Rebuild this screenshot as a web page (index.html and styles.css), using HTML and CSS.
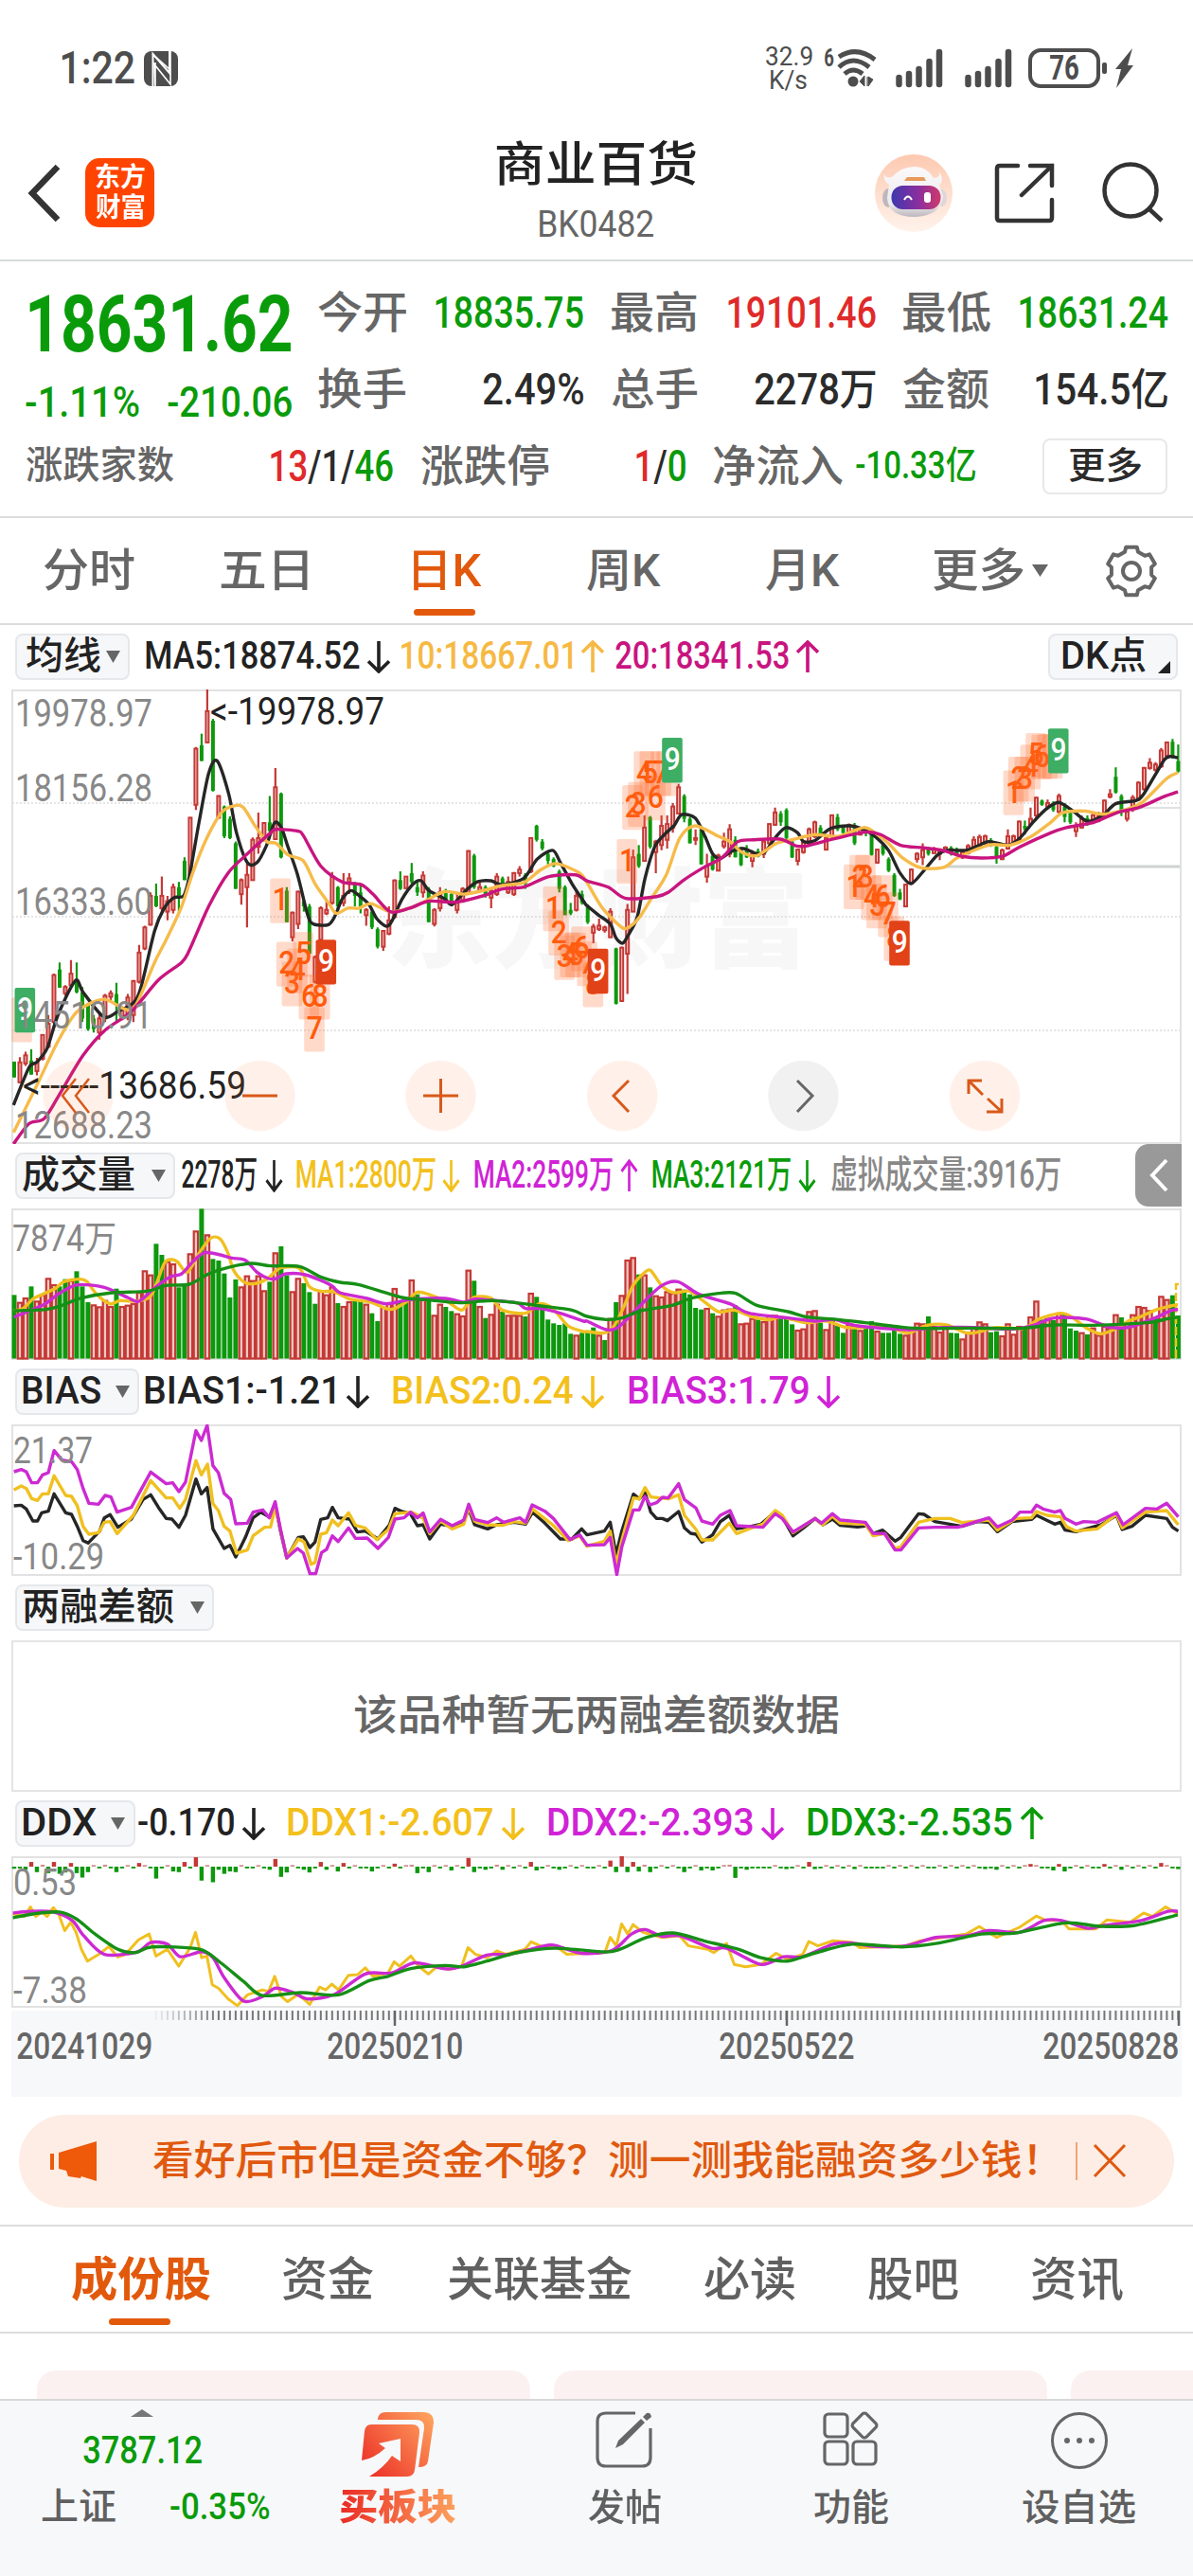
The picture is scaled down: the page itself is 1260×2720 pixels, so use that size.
FILE: index.html
```html
<!DOCTYPE html>
<html lang="zh-CN">
<head>
<meta charset="utf-8">
<title>商业百货 BK0482</title>
<link rel="stylesheet" href="styles.css">
</head>
<body>
<svg class="defs" width="0" height="0">
  <symbol id="down" viewBox="0 0 26 36" preserveAspectRatio="none"><path d="M13 1V34M2 23L13 34L24 23" fill="none" stroke="currentColor" stroke-width="3.6"/></symbol>
  <symbol id="up" viewBox="0 0 26 36" preserveAspectRatio="none"><path d="M13 35V2M2 13L13 2L24 13" fill="none" stroke="currentColor" stroke-width="3.6"/></symbol>
  <symbol id="signal" viewBox="0 0 51 42"><path d="M3.500 31V38M14 27V38M24.500 22V38M35.500 14V38M46 4V38" fill="none" stroke="#4d4d4d" stroke-width="6.500" stroke-linecap="round"/></symbol>
</svg>

<div class="status">
  <span class="clock" data-w="77">1:22</span>
  <svg class="nfc" width="36" height="37" viewBox="0 0 36 37"><rect width="36" height="37" rx="8" fill="#4d4d4d"/><path d="M9.500 37V3L27 23V0" fill="none" stroke="#fff" stroke-width="2"/><path d="M9 3L27 19M12 12V37L11 14L28 35L28 0" fill="none" stroke="#fff" stroke-width="1.600"/></svg>
  <div class="speed"><span data-w="49">32.9</span><span data-w="38">K/s</span></div>
  <span class="six" data-w="10">6</span>
  <svg class="wifi" width="44" height="42" viewBox="0 0 44 42"><g fill="none" stroke="#4d4d4d" stroke-width="5"><path d="M3 9Q22-3 41 12"/><path d="M3 20Q18 6 35 20"/><path d="M9 27Q18 19 28 27"/></g><circle cx="18" cy="35" r="5.500" fill="#4d4d4d"/><path d="M25 35L30 29V40ZM33 30V40M39 33L34 30V40Z" fill="#4d4d4d" stroke="#4d4d4d"/></svg>
  <svg class="sig" width="51" height="42"><use href="#signal"/></svg>
  <svg class="sig2" width="51" height="42"><use href="#signal"/></svg>
  <div class="battery"><span data-w="30">76</span></div>
  <svg width="36" height="42" viewBox="0 0 36 42"><rect x="2" y="15" width="5" height="12" rx="2" fill="#4d4d4d"/><path d="M34 0L16 22H22L17 42L35 18H29Z" fill="#4d4d4d"/></svg>
</div>

<header class="head">
  <svg class="back" width="36" height="62" viewBox="0 0 36 62"><path d="M33 3L6 31L33 59" fill="none" stroke="#333" stroke-width="6.500"/></svg>
  <div class="logo"><span data-w="52">东方</span><span data-w="52">财富</span></div>
  <div class="title"><h1 data-w="211">商业百货</h1><p data-w="120">BK0482</p></div>
  <svg width="82" height="82" viewBox="0 0 82 82" class="robot">
    <defs><linearGradient id="peach" x2="0" y2="1"><stop stop-color="#fdc9b0"/><stop offset="1" stop-color="#fff3ec"/></linearGradient><linearGradient id="visor"><stop stop-color="#3e38ae"/><stop offset=".55" stop-color="#8b2f9e"/><stop offset="1" stop-color="#ce3a6c"/></linearGradient><linearGradient id="helmet" x2="0" y2="1"><stop stop-color="#fbf9fa"/><stop offset=".75" stop-color="#eceaed"/><stop offset="1" stop-color="#bdb7bc"/></linearGradient></defs>
    <circle cx="41" cy="41" r="41" fill="url(#peach)"/><ellipse cx="14" cy="46" rx="6" ry="10" fill="#bdb8be"/><ellipse cx="71" cy="46" rx="5" ry="9" fill="#ddd7da"/>
    <path d="M10 19Q9 26 18 24Q28 13 42 13Q55 13 62 25Q70 25 68 18Q74 28 68 33L72 44Q70 65 42 66Q14 66 13 46L15 32Q8 28 10 19Z" fill="url(#helmet)"/><path d="M34 24H52L54 28H31Z" fill="#e79a5c"/>
    <rect x="17.500" y="33" width="52" height="25" rx="12" fill="url(#visor)"/><path d="M31 48Q35 41 39 48" fill="none" stroke="#fff" stroke-width="2"/><rect x="52" y="40" width="7" height="11" rx="3" fill="#fff"/></svg>
  <svg class="share" width="64" height="64" viewBox="0 0 64 64"><path d="M25 3H6Q3 3 3 6V58Q3 61 6 61H58Q61 61 61 58V39M61 24V3H38M61 3L29 34" fill="none" stroke="#333" stroke-width="4.500" stroke-linecap="round"/></svg>
  <svg class="search" width="66" height="66" viewBox="0 0 66 66"><circle cx="30" cy="30" r="27.500" fill="none" stroke="#333" stroke-width="4.500"/><path d="M49 49L63 62" stroke="#333" stroke-width="4.500"/></svg>
</header>

<section class="quote">
  <div class="last">
    <div class="price green" data-w="276">18631.62</div>
    <div class="change green"><span data-w="120">-1.11%</span><span data-w="131">-210.06</span></div>
  </div>
  <div class="stats">
    <b data-w="93">今开</b><i class="green" data-w="156">18835.75</i><b data-w="90">最高</b><i class="red" data-w="156">19101.46</i><b data-w="92">最低</b><i class="green" data-w="156">18631.24</i>
    <b data-w="92">换手</b><i data-w="106">2.49%</i><b data-w="90">总手</b><i data-w="128">2278万</i><b data-w="90">金额</b><i data-w="139">154.5亿</i>
  </div>
  <div class="breadth">
    <b class="small" data-w="156">涨跌家数</b><i data-w="129"><em class="red">13</em>/1/<em class="green">46</em></i><b data-w="135">涨跌停</b><i data-w="52"><em class="red">1</em>/<em class="green">0</em></i><b data-w="137">净流入</b><i class="small green" data-w="126">-10.33亿</i><div class="more"><span data-w="76">更多</span></div>
  </div>
</section>

<nav class="periods">
  <span data-w="96">分时</span><span data-w="92">五日</span><span class="on" data-w="72">日K</span><span data-w="78">周K</span><span data-w="78">月K</span><span data-w="95">更多</span>
  <svg width="18" height="14"><path d="M0 0H17L8.500 13Z" fill="#666"/></svg>
  <svg width="58" height="58" viewBox="-29 -29 58 58"><path id="gear" d="" fill="none" stroke="#666" stroke-width="4" stroke-linejoin="round"/><circle r="9" fill="none" stroke="#666" stroke-width="4"/></svg>
</nav>

<div class="legend ma">
  <div class="pick"><span data-w="78">均线</span><svg width="15" height="13"><path d="M0 0H15L7.500 13Z" fill="#666"/></svg></div>
  <span data-w="226">MA5:18874.52</span><svg><use href="#down"/></svg>
  <span class="amber" data-w="180">10:18667.01</span><svg class="amber"><use href="#up"/></svg>
  <span class="rose" data-w="183">20:18341.53</span><svg class="rose"><use href="#up"/></svg>
  <div class="pick dk"><span data-w="88">DK点</span><svg width="13" height="13"><path d="M13 0V13H0Z" fill="#222"/></svg></div>
</div>
<div class="kbox">
  <svg id="kline" class="chart tall" viewBox="0 728 1260 480"></svg>
</div>

<div class="legend vol">
  <div class="pick"><span data-w="118">成交量</span><svg width="15" height="13"><path d="M0 0H15L7.500 13Z" fill="#666"/></svg></div>
  <span data-w="79">2278万</span><svg><use href="#down"/></svg>
  <span class="gold" data-w="147">MA1:2800万</span><svg class="gold"><use href="#down"/></svg>
  <span class="violet" data-w="146">MA2:2599万</span><svg class="violet"><use href="#up"/></svg>
  <span class="green" data-w="146">MA3:2121万</span><svg class="green"><use href="#down"/></svg>
  <span class="grey" data-w="242">虚拟成交量:3916万</span>
  <div class="drawer"><svg width="20" height="36" viewBox="0 0 20 36"><path d="M18 2L3 18L18 34" fill="none" stroke="#fff" stroke-width="4"/></svg></div>
</div>
<svg id="volume" class="chart" viewBox="0 1276 1260 160"></svg>

<div class="legend bias">
  <div class="pick"><span data-w="82">BIAS</span><svg width="15" height="13"><path d="M0 0H15L7.500 13Z" fill="#666"/></svg></div>
  <span data-w="200">BIAS1:-1.21</span><svg><use href="#down"/></svg>
  <span class="gold" data-w="190">BIAS2:0.24</span><svg class="gold"><use href="#down"/></svg>
  <span class="violet" data-w="190">BIAS3:1.79</span><svg class="violet"><use href="#down"/></svg>
</div>
<svg id="bias" class="chart" viewBox="0 1504 1260 160"></svg>

<div class="legend margin">
  <div class="pick"><span data-w="159">两融差额</span><svg width="15" height="13"><path d="M0 0H15L7.500 13Z" fill="#666"/></svg></div>
</div>
<div class="empty"><span data-w="512">该品种暂无两融差额数据</span></div>

<div class="legend ddx">
  <div class="pick"><span data-w="78">DDX</span><svg width="15" height="13"><path d="M0 0H15L7.500 13Z" fill="#666"/></svg></div>
  <span data-w="101">-0.170</span><svg><use href="#down"/></svg>
  <span class="gold" data-w="217">DDX1:-2.607</span><svg class="gold"><use href="#down"/></svg>
  <span class="violet" data-w="216">DDX2:-2.393</span><svg class="violet"><use href="#down"/></svg>
  <span class="green" data-w="216">DDX3:-2.535</span><svg class="green"><use href="#up"/></svg>
</div>
<svg id="ddx" class="chart" viewBox="0 1960 1260 160"></svg>
<div class="axis">
  <svg id="ticks" width="1236" height="17" viewBox="12 2123 1236 17"></svg>
  <div class="dates"><span data-w="142">20241029</span><span data-w="142">20250210</span><span data-w="142">20250522</span><span data-w="142">20250828</span></div>
</div>

<div class="promo">
  <svg width="50" height="44" viewBox="0 0 50 44"><path d="M0 14H4V31H0ZM9 13L49 1V43L33 38L32 40L19 38L17 32L9 30Z" fill="#ee5a0a"/></svg>
  <span data-w="932">看好后市但是资金不够？测一测我能融资多少钱！</span>
  <svg class="close" width="54" height="40" viewBox="0 0 54 40"><path d="M1 0V40" stroke="#e0590f" stroke-width="1"/><path d="M20 3L52 36M52 3L20 36" stroke="#e0590f" stroke-width="3"/></svg>
</div>

<nav class="sections"><span class="on" data-w="146">成份股</span><span data-w="95">资金</span><span data-w="194">关联基金</span><span data-w="96">必读</span><span data-w="95">股吧</span><span data-w="96">资讯</span></nav>
<div class="cards"><div></div><div></div><div></div></div>

<footer class="bar">
  <div class="index">
    <svg width="24" height="8"><path d="M12 0L24 8H0Z" fill="#777"/></svg>
    <strong class="green" data-w="125">3787.12</strong>
    <div><span data-w="78">上证</span><strong class="green" data-w="104">-0.35%</strong></div>
  </div>
  <div class="act buy">
    <svg width="78" height="70" viewBox="0 0 78 70"><defs><linearGradient id="hot" gradientUnits="userSpaceOnUse" x1="5" y1="65" x2="72" y2="5"><stop stop-color="#ec2f27"/><stop offset="1" stop-color="#fd9f5c"/></linearGradient></defs><g fill="url(#hot)"><path d="M18 8Q19 1 26 1H66Q77 1 77 12L71 53Q70 59 61 59L67 18Q68 9 58 9H18Z"/><path d="M11 14H54Q63 14 62 23L57 62Q56 69 49 69H9Q24 60 33 47L42 53V29L19 34L26 39Q14 50 1 52L4 21Q5 14 11 14Z"/></g></svg>
    <span class="hot" data-w="122">买板块</span>
  </div>
  <div class="act">
    <svg width="60" height="60" viewBox="0 0 60 60"><path d="M42 2H11Q2 2 2 11V49Q2 58 11 58H49Q58 58 58 49V18" fill="none" stroke="#666" stroke-width="3.200"/><path d="M21 39L24 31L48 8L52 12L29 35ZM50 6L54 2Q58 1 59 6L54 10Z" fill="#666"/></svg>
    <span data-w="77">发帖</span>
  </div>
  <div class="act">
    <svg width="60" height="60" viewBox="0 0 60 60"><g fill="none" stroke="#666" stroke-width="3.200"><rect x="2" y="3" width="24" height="24" rx="4"/><rect x="2" y="32" width="24" height="24" rx="4"/><rect x="32" y="32" width="24" height="24" rx="4"/><rect x="34" y="5" width="20" height="20" rx="3" transform="rotate(45 44 15)"/></g></svg>
    <span data-w="78">功能</span>
  </div>
  <div class="act">
    <svg width="62" height="62" viewBox="0 0 62 62"><circle cx="31" cy="31" r="28.500" fill="none" stroke="#666" stroke-width="3"/><g fill="#666"><circle cx="18" cy="31" r="3"/><circle cx="31" cy="31" r="3"/><circle cx="44" cy="31" r="3"/></g></svg>
    <span data-w="119">设自选</span>
  </div>
</footer>
<script src="charts.js"></script>
</body>
</html>
```
FILE: styles.css
```css
* { box-sizing: border-box; }
body { margin: 0; width: 1260px; height: 2720px; overflow: hidden; background: #fff; color: #2b2b2b; font-family: Roboto, "Noto Sans CJK SC", sans-serif; font-size: 46px; line-height: 1; display: flex; flex-direction: column; }
body > * { flex: none; }
.defs { display: block; height: 0; }
svg { display: block; flex: none; }
i, em { font-style: normal; }
b { font-weight: 500; }
[data-w] { display: block; white-space: nowrap; flex: none; }
.ink { display: inline-block; transform-origin: 0 50%; }
.green { color: #0a9b0a; }
.red { color: #e02a2a; }
.grey { color: #888; }

.status { height: 136px; padding: 51px 0 0 65px; display: flex; color: #4d4d4d; }
.status .clock { font-size: 48px; font-weight: 500; margin-top: -3px; }
.nfc { margin: 3px 0 0 10px; }
.speed { width: 52px; margin-left: 619px; font-size: 27px; display: flex; flex-direction: column; align-items: center; margin-top: -3px; line-height: 25px; }
.six { font-size: 26px; font-weight: 700; margin-left: 12px; margin-top: -3px; }
.wifi { margin-left: 2px; }
.sig { margin-left: 19px; }
.sig2 { margin-left: 22px; }
.battery { width: 76px; height: 42px; border: 4px solid #4d4d4d; border-radius: 13px; margin-left: 16px; display: flex; justify-content: center; align-items: center; font-size: 37px; font-weight: 700; line-height: 34px; }

.head { height: 140px; padding: 0 20px 3px 28px; display: flex; align-items: center; border-bottom: 2px solid #d8dcdc; }
.back { margin-right: 26px; }
.logo { width: 73px; height: 73px; flex: none; background: #ff4400; border-radius: 15px; color: #fff; font-size: 28px; font-weight: 700; display: flex; flex-direction: column; align-items: center; justify-content: center; line-height: 32px; }
.title { width: 211px; flex: none; margin-left: 361px; display: flex; flex-direction: column; align-items: center; }
.title h1 { margin: 0; font-size: 50px; font-weight: 500; line-height: 58px; color: #222; }
.title p { margin: 8px 0 0; font-size: 38px; line-height: 52px; color: #666; }
.robot { margin-left: 189px; }
.share { margin-left: 44px; }
.search { margin-left: 50px; }

.quote { height: 271px; display: grid; grid-template-columns: 336px 1fr; grid-template-rows: 176px 1fr; border-bottom: 2px solid #dcdcdc; }
.price { font-size: 84px; font-weight: 700; margin: 25px 0 0 31px; }
.change { margin: 17px 0 0 27px; display: flex; gap: 30px; line-height: 46px; font-size: 45px; font-weight: 500; }
.stats { display: grid; grid-template-columns: 93px 187px 1px 29px 90px 189px 1px 28px 92px 187px; grid-template-rows: 81px 81px; align-items: center; padding-top: 13px; }
.stats b, .breadth b { color: #666; }
.stats i, .breadth i { font-weight: 500; }
.stats i { justify-self: end; }
.stats b:nth-of-type(3n+1) { grid-column: 1; }
.stats i:nth-of-type(3n+1) { grid-column: 2; }
.stats b:nth-of-type(3n+2) { grid-column: 5; }
.stats i:nth-of-type(3n+2) { grid-column: 6; }
.stats b:nth-of-type(3n+3) { grid-column: 9; }
.stats i:nth-of-type(3n+3) { grid-column: 10; }
.breadth { grid-column: 1 / 3; height: 80px; display: grid; grid-template-columns: 258px 159px 227px 81px 151px 197px 132px; align-items: center; padding-left: 28px; }
.breadth .small { font-size: 40px; }
.more { width: 132px; height: 59px; border: 2px solid #e8e8e8; border-radius: 8px; display: grid; place-items: center; font-size: 39px; font-weight: 500; }

.periods { height: 113px; display: grid; grid-template-columns: 187px 204px 183px 189px 177px 104px 76px 58px; align-items: center; padding-left: 46px; font-size: 48px; font-weight: 500; color: #666; border-bottom: 2px solid #dcdcdc; }
.on { position: relative; color: #e2590c; }
.on::after { content: ""; position: absolute; left: 0; top: 64px; width: 65px; height: 7px; border-radius: 4px; background: #e2590c; }

.legend { height: 68px; display: grid; align-items: center; font-size: 40px; padding: 0 0 2px 16px; color: #222; font-weight: 500; }
.legend > svg { width: 26px; height: 35px; }
.amber { color: #f6b944; }
.rose { color: #c8157f; }
.gold { color: #f3c01c; }
.violet { color: #d022d6; }
.pick { height: 49px; background: #f6f7f9; border: 2px solid #e5e7ea; border-radius: 8px; display: flex; align-items: center; gap: 6px; padding-left: 10px; line-height: 44px; }
.ma { grid-template-columns: 138px 233px 37px 189px 37px 190px 267px 137px; }
.ma .pick { width: 121px; }
.ma .dk { width: 137px; gap: 13px; padding-left: 13px; }
.dk svg { align-self: flex-end; margin-bottom: 5px; }
.vol { grid-template-columns: 176px 88px 33px 154px 34px 154px 34px 154px 35px 321px 49px; }
.vol .pick { width: 169px; gap: 18px; padding-left: 6px; }
.vol > svg { width: 19px; }
.drawer { height: 66px; background: #999; border-radius: 14px 0 0 14px; display: grid; place-items: center; }
.bias { grid-template-columns: 137px 212px 50px 198px 51px 198px 1fr; }
.bias .pick { width: 131px; gap: 16px; padding-left: 6px; }
.margin .pick { width: 210px; gap: 17px; padding-left: 7px; }
.ddx { grid-template-columns: 130px 109px 49px 225px 50px 224px 50px 224px 1fr; }
.ddx .pick { width: 127px; gap: 15px; padding-left: 6px; }

.chart { width: 1260px; height: 160px; }
.chart.tall { height: 480px; }
.kbox { height: 480px; }
.empty { height: 160px; margin: 0 12px; border: 2px solid #e4e4e4; display: grid; place-items: center; font-size: 44px; font-weight: 500; color: #666; }
.axis { height: 91px; margin: 3px 12px 0; background: #f7f8fa; }
.dates { display: grid; grid-template-columns: 328px 414px 342px 142px; padding-left: 6px; font-size: 38px; color: #666; margin-top: 1px; line-height: 40px; font-weight: 500; }

.promo { height: 98px; margin: 19px 20px 0; border-radius: 49px; background: #fdede4; display: flex; align-items: center; padding: 0 0 1px 33px; color: #e0590f; font-size: 42px; font-weight: 500; }
.promo > span { margin: 0 42px 0 59px; }
.sections { height: 115px; margin-top: 18px; border-top: 2px solid #dcdcdc; border-bottom: 2px solid #dcdcdc; display: grid; grid-template-columns: 223px 174px 271px 173px 173px 96px; padding: 1px 0 0 76px; align-items: center; font-size: 49px; color: #606060; font-weight: 500; }
.sections .on { font-weight: 700; }
.sections .on::after { left: 39px; top: 65px; }
.cards { height: 69px; padding: 39px 0 0 39px; display: grid; grid-template-columns: 521px 521px 521px; gap: 25px; overflow: hidden; }
.cards div { background: #fcf1f1; border-radius: 20px 20px 0 0; }
.bar { height: 187px; background: #f7f8fa; border-top: 2px solid #d8d8d8; display: grid; grid-template-columns: 300px 239px 240px 240px 241px; color: #606060; font-size: 39px; font-weight: 500; }
.index { display: flex; flex-direction: column; align-items: center; padding-top: 9px; font-size: 41px; }
.index strong { font-weight: 500; }
.index > strong { margin-top: 13px; line-height: 44px; }
.index > div { display: flex; width: 240px; margin-left: 28px; gap: 58px; margin-top: 16px; line-height: 44px; font-size: 39px; }
.act { display: flex; flex-direction: column; align-items: center; padding-top: 11px; }
.act > span { line-height: 44px; margin-top: auto; margin-bottom: 50px; }
.buy .hot { font-weight: 900; font-size: 38px; margin-bottom: 51px; }
.buy .ink { color: transparent; background: linear-gradient(90deg, #ea2a24, #fda15d); -webkit-background-clip: text; background-clip: text; font-style: oblique 8deg; }
```
FILE: charts.js
```js
const NS = 'http://www.w3.org/2000/svg';
const RED = '#c43936', GREEN = '#0d980d', BLACK = '#262626', AMBER = '#f6bb4a', ROSE = '#c8157f', GOLD = '#f0c020', VIOLET = '#cc2ad2';

/* Condense every label to the ink width given in data-w. */
const ctx = document.createElement('canvas').getContext('2d');
document.querySelectorAll('[data-w]').forEach(el => {
  const w = +el.dataset.w, s = getComputedStyle(el);
  ctx.font = `${s.fontWeight} ${s.fontSize} ${s.fontFamily}`;
  const m = ctx.measureText(el.textContent);
  const k = w / (m.actualBoundingBoxLeft + m.actualBoundingBoxRight);
  el.innerHTML = `<span class="ink">${el.innerHTML}</span>`;
  el.style.width = w + 'px';
  el.firstChild.style.transform = `translateX(${m.actualBoundingBoxLeft * k}px) scaleX(${k})`;
});

function add(svg, tag, attrs, text) {
  const n = document.createElementNS(NS, tag);
  for (const a in attrs) n.setAttribute(a, attrs[a]);
  if (text) n.textContent = text;
  svg.appendChild(n);
  return n;
}
const rect = (svg, x, y, width, height, fill, o = {}) => add(svg, 'rect', { x, y, width, height, fill, ...o });
const line = (svg, d, stroke, w = 2, o = {}) => add(svg, 'path', { d, stroke, fill: 'none', 'stroke-width': w, ...o });
const label = (svg, x, y, w, t, fill = '#888', size = 40, o = {}) => add(svg, 'text', { x, y, fill, 'font-size': size, textLength: w, lengthAdjust: 'spacingAndGlyphs', ...o }, t);
const frame = (svg, y, h) => rect(svg, 13, y + 1, 1234, h - 2, 'none', { stroke: '#e2e2e2', 'stroke-width': 2 });

/* Series points are kept in plot units: 2.45 per px across, own vertical scale per panel. */
const pts = s => s.trim().split(/\s+/).map(p => p.split(',').map(Number));
function smooth(p) {
  let d = `M${p[0]}`;
  for (let i = 0; i < p.length - 1; i++) {
    const a = p[i - 1] || p[i], b = p[i], c = p[i + 1], e = p[i + 2] || c;
    d += `C${b[0] + (c[0] - a[0]) / 7},${b[1] + (c[1] - a[1]) / 7} ${c[0] - (e[0] - b[0]) / 7},${c[1] - (e[1] - b[1]) / 7} ${c}`;
  }
  return d;
}
function series(svg, left, right, y0, ky, color, curved = true, w = 3.4, kx = 2.45) {
  let p = pts(left).filter(q => !right || q[0] < 1519);
  if (right) p = p.concat(pts(right).map(([x, y]) => [x + 1519, y]));
  p = p.map(([x, y]) => [x / kx, y0 + y / ky]);
  line(svg, curved ? smooth(p) : 'M' + p.join('L'), color, w, { 'stroke-linejoin': 'round' });
}
const X = i => 15 + 5.997 * i;

const volume = `G502 R524 R510 G475 R520 R500 R448 R468 G475 G452 R455 G427 G475 G525 R532 R538 R518 R537 G482 R537 R533 R528 R492 R424 R437 G340 G375 R395 R402 G478 G470 R370 R298 G229 R310 G388 G393 G434 G510 G453 R475 R440 R455 R440 R487 G460 R367 G348 G440 R490 R448 G465 G493 G530 R488 R500 R475 G528 R537 R522 G520 G522 R530 G560 G585 R540 R525 R480 G520 G515 R453 G500 R515 G515 R565 R530 G540 G553 R560 R567 R422 G457 R537 G575 R562 R530 G555 R565 R565 R565 G570 R495 G508 G540 G580 G592 G597 G592 G625 R628 G622 G620 G605 R628 G645 R575 G525 R502 R390 R382 G437 R437 G478 R503 R507 R490 R495 R482 G485 G500 G543 G548 R543 G560 R568 R548 R545 G535 R592 R590 R575 G580 R585 R565 R565 G570 G578 G595 R612 R608 R553 R550 G590 R610 R585 G600 G622 R595 G600 R613 G600 G585 R615 G622 G622 G612 G625 R628 R608 R590 R592 G570 R600 R618 R605 G622 G623 R640 R618 R602 R586 R592 G620 G617 R630 R592 R625 R600 G605 R570 R520 G580 R575 G582 R558 G560 G608 G615 R620 G627 R605 R628 R600 R605 R563 G573 R590 R563 R537 R540 R550 G575 R505 R515 G503 G567`.split(' ');

/* high, body top, body bottom, low */
const candles = `1273,1273,1318,1318 1260,1275,1332,1334 1245,1255,1278,1285 1238,1270,1310,1310 1262,1275,1300,1312 1195,1197,1265,1270 1140,1165,1230,1235 1022,1026,1160,1165 990,1010,1062,1062 1055,1060,1078,1085 983,1022,1055,1060 990,1040,1075,1078 1060,1075,1150,1160 1105,1110,1180,1185 1140,1150,1180,1190 1130,1150,1190,1210 1080,1085,1150,1160 1070,1078,1088,1100 1048,1080,1110,1160 1115,1120,1150,1155 1080,1090,1140,1155 1040,1043,1140,1160 940,962,1045,1050 885,890,950,955 790,800,882,885 765,800,830,832 745,800,835,850 800,815,845,870 765,775,840,850 760,775,800,845 690,700,755,755 575,577,740,745 375,380,540,555 337,370,415,415 211,273,362,365 295,300,500,502 513,515,577,580 542,545,630,635 573,580,635,638 645,650,780,780 750,755,795,825 708,740,775,890 633,640,755,757 562,635,660,680 590,592,640,645 515,590,615,618 435,490,638,640 505,508,690,693 775,785,875,875 845,848,918,930 785,788,880,895 810,815,830,845 823,830,965,968 970,975,1045,1050 830,835,925,930 815,840,850,855 732,745,820,825 772,775,830,845 735,800,820,830 735,750,760,795 760,765,800,830 770,790,830,850 835,840,855,885 840,845,890,895 890,895,945,950 898,900,945,957 830,870,908,912 753,756,860,865 730,755,780,783 743,745,778,780 706,735,760,765 760,775,790,800 730,742,790,805 775,780,875,875 835,840,880,887 775,790,835,845 780,790,815,818 790,795,820,830 795,820,840,850 775,780,815,820 670,672,790,795 680,685,775,780 760,775,785,790 770,775,800,805 780,785,805,835 735,745,795,800 745,750,768,770 745,760,790,795 732,735,795,800 715,725,735,745 735,740,765,780 633,635,730,735 597,600,640,645 638,645,665,670 670,680,700,710 690,695,715,718 725,730,780,790 770,775,855,855 820,840,850,855 785,800,840,845 785,795,820,825 825,830,875,880 880,888,905,935 865,885,895,900 885,890,898,905 835,845,918,920 948,950,1108,1110 945,948,1100,1103 823,840,965,1080 668,690,845,845 655,680,715,720 570,605,700,700 572,575,660,665 640,645,675,735 570,600,655,670 570,595,640,665 535,545,605,620 480,490,565,565 510,515,580,590 575,580,650,650 610,635,640,655 600,610,710,710 680,715,745,762 680,685,725,728 680,685,728,730 620,645,658,665 595,610,680,690 630,640,690,690 660,670,712,715 655,665,690,692 670,680,700,718 665,672,688,690 640,645,680,692 593,595,650,655 548,562,597,600 558,565,590,600 550,555,635,640 640,645,690,692 665,668,700,713 640,645,675,680 605,610,650,655 585,590,630,635 598,605,625,630 625,635,668,670 568,570,630,635 566,575,610,615 600,605,620,630 593,598,620,630 592,600,650,655 603,610,625,628 605,610,620,630 610,620,683,685 665,668,705,708 650,655,680,685 690,695,728,732 735,740,800,803 780,790,810,812 765,768,830,832 722,725,765,768 675,680,695,705 650,670,690,712 660,668,680,685 660,665,678,680 665,670,680,698 658,662,672,675 658,662,680,685 662,668,680,685 668,675,690,695 652,658,678,682 630,640,665,668 625,632,660,665 625,630,650,655 635,640,655,660 650,660,690,708 665,670,695,698 610,630,665,668 625,630,645,650 585,588,640,640 585,600,610,625 548,580,595,600 517,520,570,580 525,528,540,543 525,535,545,550 530,535,555,560 508,515,560,565 535,545,575,590 550,560,590,595 590,600,615,632 570,580,605,608 570,578,595,600 560,570,590,595 560,572,585,590 525,528,575,580 495,510,517,522 433,460,505,508 510,515,560,572 555,560,580,588 512,520,550,560 473,477,525,530 432,435,495,500 407,420,435,440 418,425,440,445 378,385,430,435 360,362,400,402 352,360,400,408 368,415,445,448`.split(' ').map(s => s.split(',').map(Number));
/* days whose close-on-close colour differs from the volume colour */
const flip = new Set([9, 14, 26, 36, 53, 69, 70, 102, 104, 128, 129, 120, 187, 194, 201]);

/* ---- K line ---- */
const K = document.getElementById('kline'), KY = y => 650 + y / 2.703;
frame(K, 728, 480);
label(K, 408, 1012, 446, '东方财富', '#f7f7f7', 114, { 'font-weight': 900 });
[848, 968, 1088].forEach(y => line(K, `M13 ${y}H1246`, '#dcdcdc', 1.5, { 'stroke-dasharray': '2 2' }));
line(K, 'M1000 915H1246', '#cfd2d2', 3);
line(K, 'M1196 853H1246', '#d5d8d8', 1.5);
candles.forEach(([h, t, b, l], i) => {
  const red = (volume[i][0] === 'R') !== flip.has(i), x = X(i);
  if (red) {
    line(K, `M${x} ${KY(h)}V${KY(t)}M${x} ${KY(b)}V${KY(l)}`, RED, 2.2);
    rect(K, x - 1.5, KY(t), 3, Math.max(1.5, (b - t) / 2.703), '#f3cfcc', { stroke: RED, 'stroke-width': 2 });
  } else {
    line(K, `M${x} ${KY(h)}V${KY(l)}`, GREEN, 2.2);
    rect(K, x - 2, KY(t), 4, (b - t) / 2.703, GREEN);
  }
});
series(K, '35,1397 75,1290 95,1275 122,1235 150,1140 195,1042 215,1075 268,1145 305,1130 345,1105 365,1060 400,900 425,835 450,805 475,800 490,745 515,590 540,450 562,415 592,510 612,620 640,705 665,705 690,655 710,592 728,605 745,660 770,740 795,850 810,880 850,882 868,855 885,810 908,785 930,800 955,825 975,865 1000,887 1015,870 1040,810 1070,765 1090,757 1110,785 1150,808 1170,825 1205,785 1235,760 1270,757 1300,768 1355,750 1390,695 1430,670 1450,705 1480,765 1510,815 1568,870',
  '0,828 30,855 60,880 75,920 92,935 105,915 130,860 150,750 175,660 200,625 225,600 245,568 280,578 305,630 325,680 345,693 375,672 405,665 440,680 460,675 490,630 515,605 545,620 560,645 590,642 630,608 680,600 715,610 745,630 780,670 810,735 838,765 870,730 905,685 930,670 980,670 1010,658 1040,645 1090,655 1120,635 1150,595 1185,555 1220,533 1260,560 1295,587 1335,570 1368,537 1420,528 1440,510 1470,455 1495,410 1510,402 1529,406', 650, 2.703, BLACK);
series(K, '35,1475 60,1420 100,1330 150,1215 200,1130 268,1095 320,1122 350,1115 400,990 430,925 470,830 500,730 535,635 575,560 610,542 630,548 660,600 690,645 715,650 745,683 785,700 815,765 850,820 870,850 900,835 930,835 960,822 1010,845 1060,835 1100,815 1150,788 1200,795 1250,785 1300,770 1355,762 1400,725 1440,708 1500,735 1568,840',
  '0,762 40,835 90,890 110,888 135,862 165,810 205,740 240,635 280,600 340,630 370,645 400,675 440,685 490,650 530,640 590,625 650,630 715,605 745,620 780,650 815,690 865,720 925,718 960,690 1040,655 1095,655 1150,630 1200,590 1230,563 1290,558 1335,567 1400,552 1440,530 1500,465 1529,448', 650, 2.703, AMBER);
series(K, '35,1508 75,1450 115,1435 160,1355 215,1255 270,1185 340,1130 410,1040 470,990 490,955 540,830 590,735 640,680 700,620 715,610 770,615 785,628 830,715 885,760 935,768 965,795 1010,845 1060,835 1110,815 1180,818 1250,800 1300,780 1355,775 1420,745 1490,740 1568,775',
  '0,757 55,775 100,807 180,802 210,790 250,755 300,720 350,690 390,645 430,640 500,638 540,657 570,657 640,637 720,618 760,625 810,655 870,663 920,670 970,687 1020,692 1075,687 1120,660 1200,620 1240,605 1310,590 1370,563 1430,547 1490,518 1529,503', 650, 2.703, ROSE);

/* nine-turn counters: x, y, digit */
const turns = [
  [30, 1090, ''], [38, 1062, '9G'],
  [699, 750, 1], [715, 931, 2], [729, 987, 3], [743, 950, 4], [758, 903, 5], [773, 1025, 6], [787, 1117, 7], [801, 1025, 8], [817, 925, '9R'],
  [1405, 773, 1], [1419, 842, 2], [1434, 912, 3], [1449, 905, 4], [1463, 905, 5], [1478, 887, 6], [1493, 930, 7], [1508, 990, 8], [1521, 951, '9R'],
  [1596, 638, 1], [1610, 484, 2], [1625, 475, 3], [1640, 387, 4], [1655, 387, 5], [1669, 457, 6], [1684, 387, 7], [1699, 387, ''], [1713, 349, '9G'],
  [2183, 710, 1], [2198, 683, 2], [2213, 683, 3], [2228, 741, 4], [2242, 765, 5], [2257, 741, 6], [2272, 790, 7], [2287, 858, 8], [2301, 871, '9R'],
  [2596, 442, 1], [2609, 403, 2], [2625, 403, 3], [2640, 368, 4], [2654, 335, 5], [2669, 340, 6], [2684, 338, ''], [2697, 338, ''], [2712, 322, '9G']
];
turns.forEach(([x, y, d]) => {
  const s = String(d), nine = s[0] === '9', fill = s === '9G' ? '#3dae64' : s === '9R' ? '#e24218' : '#ff6a2b';
  rect(K, x / 2.45, KY(y), 21.6, 47.3, fill, nine ? { rx: 2 } : { opacity: 0.25, rx: 2 });
  if (s) label(K, x / 2.45 + 2.5, KY(y) + 34, 17, s[0], nine ? '#fff' : '#ff5a0a', 34, { 'font-weight': 500 });
});
[['19978.97', 767], ['18156.28', 846], ['16333.60', 966], ['14510.91', 1086], ['12688.23', 1202]].forEach(([t, y]) => label(K, 16, y, 145, t));
label(K, 222, 765, 184, '<-19978.97', '#222');
label(K, 24, 1160, 236, '<------13686.59', '#222');
[82.6, 274.5, 465.5, 657.3, 848.5, 1040].forEach((x, i) => add(K, 'circle', { cx: x, cy: 1157, r: 37.3, fill: i === 4 ? '#777' : '#ff7433', opacity: 0.1 }));
[['M80 1139L66 1157L80 1175M94 1139L80 1157L94 1175', 2.5], ['M256 1157H293', 3], ['M447 1157H484M465.500 1139V1175', 3], ['M664 1141L648 1157L664 1174', 3], ['M1023 1155V1141H1037M1023 1141L1038 1156M1042 1174H1058V1160M1043 1160L1058 1174', 3]].forEach(([d, w]) => line(K, d, '#d9591a', w));
line(K, 'M842 1141L858 1157L842 1174', '#666', 3);

/* ---- Volume ---- */
const V = document.getElementById('volume');
frame(V, 1276, 160);
volume.forEach((v, i) => {
  const y = 1200 + v.slice(1) / 3, x = X(i), h = 1434.5 - y;
  if (v[0] === 'R') rect(V, x - 2.2, y + 1, 4.4, h - 1, '#f0c8c4', { stroke: RED, 'stroke-width': 2.2 });
  else rect(V, x - 2.5, y, 5, h, GREEN);
});
line(V, 'M1242 1434V1356H1247', GOLD, 2.5, { 'stroke-dasharray': '9 3' });
series(V, '36,552 60,545 85,515 110,500 145,480 165,460 205,452 225,460 250,500 285,530 310,520 345,522 390,505 425,402 445,390 460,398 485,430 515,370 545,322 570,325 590,370 605,425 630,460 655,467 690,452 715,425 730,415 775,418 800,475 830,490 865,492 905,515 960,525 1010,548 1050,525 1080,493 1120,505 1160,525 1195,550 1225,510 1270,512 1300,550 1360,560 1395,530 1430,545 1470,600 1510,618',
  '0,618 45,622 70,600 95,540 120,470 150,430 165,425 195,475 225,495 265,490 300,520 340,555 380,550 425,570 470,580 500,572 530,580 570,590 620,585 670,605 720,605 770,600 830,622 880,598 930,597 980,622 1010,620 1060,605 1130,608 1170,578 1225,560 1255,572 1290,605 1330,625 1375,605 1400,585 1430,572 1470,550 1510,537 1529,532', 1200, 3, GOLD);
series(V, '36,572 110,535 150,500 200,470 270,478 330,510 360,522 400,480 440,445 470,435 500,395 530,368 570,375 600,385 635,392 665,430 695,450 715,450 740,435 790,438 855,470 880,495 950,513 1000,530 1060,517 1150,513 1200,525 1230,515 1300,522 1340,528 1360,545 1400,545 1450,560 1510,585',
  '0,585 50,612 80,605 130,545 190,475 235,460 290,500 370,530 420,560 520,575 590,585 640,580 700,600 830,612 920,605 1000,605 1100,610 1150,600 1210,575 1290,578 1350,603 1400,605 1460,580 1510,552 1529,548', 1200, 3, VIOLET);
series(V, '36,552 120,548 160,535 210,512 290,495 380,490 430,472 490,468 540,435 590,415 650,402 700,410 775,412 830,445 880,462 930,470 1040,510 1110,518 1190,527 1280,520 1400,537 1480,550',
  '0,570 50,580 90,575 140,552 220,535 270,512 340,497 385,497 440,535 520,555 570,572 650,580 720,590 820,605 880,608 1000,607 1120,608 1210,597 1310,598 1450,590 1500,578 1529,572', 1200, 3, '#168f16');
label(V, 13, 1321, 110, '7874万', '#888', 38);

/* ---- BIAS ---- */
const B = document.getElementById('bias');
frame(B, 1504, 160);
series(B, '36,1170 55,1168 68,1180 85,1218 97,1218 108,1192 125,1187 140,1132 170,1192 185,1197 200,1235 215,1280 228,1288 258,1250 270,1208 285,1198 305,1238 340,1212 370,1150 390,1135 410,1175 430,1210 445,1212 463,1238 480,1200 507,1085 521,1132 536,1112 551,1243 580,1305 595,1295 610,1332 635,1270 655,1208 675,1190 697,1205 712,1165 725,1245 742,1335 772,1270 785,1268 802,1302 815,1285 830,1213 848,1208 860,1175 875,1208 905,1212 925,1253 945,1250 978,1275 1008,1230 1022,1178 1040,1188 1062,1195 1080,1233 1095,1230 1112,1275 1140,1228 1170,1235 1200,1220 1213,1180 1228,1230 1262,1243 1285,1230 1330,1222 1360,1228 1378,1190 1410,1225 1450,1275 1480,1275 1505,1243',
  '0,1262 45,1250 60,1222 75,1325 90,1250 120,1133 135,1148 150,1128 165,1190 180,1210 195,1210 208,1217 237,1188 252,1240 268,1257 282,1260 297,1285 325,1262 345,1220 368,1200 385,1243 425,1235 450,1228 487,1190 505,1205 533,1265 560,1240 590,1210 610,1230 635,1212 655,1232 700,1237 725,1233 740,1258 765,1247 797,1282 812,1270 858,1195 872,1197 900,1220 970,1235 1010,1220 1040,1222 1062,1252 1100,1220 1150,1213 1163,1200 1210,1228 1225,1222 1237,1247 1265,1252 1300,1240 1330,1230 1370,1200 1385,1245 1410,1235 1445,1200 1500,1210 1515,1238 1530,1250', 1200, 3, BLACK, false);
series(B, '36,1120 55,1107 68,1115 82,1147 97,1153 110,1132 125,1132 140,1075 170,1137 185,1140 200,1170 215,1235 230,1260 255,1255 270,1222 285,1220 303,1258 345,1200 390,1090 430,1145 447,1145 465,1178 480,1150 507,1027 521,1072 537,1038 551,1163 565,1185 580,1235 595,1250 612,1320 640,1310 655,1265 685,1238 700,1237 712,1175 725,1240 742,1335 772,1275 787,1285 805,1355 815,1350 830,1260 845,1255 860,1215 875,1233 902,1192 920,1232 945,1240 975,1277 1005,1245 1022,1195 1065,1190 1082,1200 1095,1210 1112,1258 1140,1218 1170,1243 1200,1228 1213,1175 1228,1218 1260,1230 1300,1232 1330,1220 1360,1225 1378,1180 1430,1230 1470,1280 1500,1265',
  '0,1298 45,1282 60,1250 75,1355 90,1280 120,1145 135,1148 150,1112 165,1142 210,1148 237,1135 252,1200 282,1245 297,1278 325,1278 368,1225 387,1258 425,1240 455,1228 487,1185 505,1200 533,1255 590,1210 610,1230 635,1203 655,1225 720,1228 740,1265 770,1258 797,1305 812,1300 858,1222 900,1210 940,1210 970,1223 1040,1215 1062,1247 1110,1210 1150,1208 1163,1188 1190,1200 1225,1205 1240,1235 1265,1250 1320,1243 1370,1197 1385,1240 1445,1190 1500,1185 1530,1230', 1200, 3, GOLD, false);
series(B, '36,1062 55,1055 68,1062 82,1097 97,1097 110,1072 125,1065 140,995 160,1025 185,1030 200,1055 215,1115 230,1162 255,1165 272,1137 287,1142 303,1190 340,1175 360,1130 390,1063 430,1100 447,1097 463,1125 480,1095 507,932 521,963 536,915 551,1043 565,1065 580,1130 597,1150 610,1227 640,1225 655,1190 680,1183 697,1208 712,1157 725,1240 742,1335 770,1305 785,1320 802,1385 817,1385 832,1318 845,1308 860,1265 875,1283 902,1240 920,1273 950,1272 978,1305 1005,1270 1022,1212 1045,1208 1062,1190 1080,1208 1095,1193 1112,1253 1140,1213 1170,1233 1200,1215 1213,1165 1228,1213 1262,1223 1285,1208 1303,1222 1345,1208 1360,1222 1377,1167 1410,1187 1432,1210 1475,1277 1500,1262',
  '0,1295 45,1293 60,1270 77,1388 90,1300 120,1183 135,1183 150,1140 163,1167 180,1160 195,1143 210,1145 237,1100 252,1150 282,1177 297,1218 325,1228 345,1200 370,1185 387,1233 455,1238 487,1195 505,1210 533,1253 590,1210 607,1225 635,1195 655,1215 720,1222 740,1257 770,1258 797,1310 812,1310 858,1240 900,1238 960,1238 1040,1208 1062,1237 1100,1215 1120,1190 1150,1190 1163,1168 1180,1180 1210,1190 1225,1185 1237,1210 1265,1228 1285,1220 1320,1222 1370,1192 1387,1230 1445,1178 1475,1180 1500,1162 1530,1205', 1200, 3, VIOLET, false);
label(B, 14, 1545, 84, '21.37', '#888', 38);
label(B, 14, 1657, 96, '-10.29', '#888', 38);

/* ---- DDX ---- */
const D = document.getElementById('ddx');
frame(D, 1960, 160);
const flows = {};
pts('40,857 55,865 70,857 93,860 137,865 182,860 242,857 257,843 361,848 420,857 450,860 518,862 540,865 615,845 653,865 698,857 802,853 817,840 832,857 847,865 960,865 1063,857 1355,863 1392,863 1452,863 1527,860 17,877 32,880 47,887 62,890 78,892 85,888 100,890 107,903 115,887 152,887 205,906 227,885 234,887 265,912 279,917 287,880 294,892 302,885 310,887 353,880 370,901 377,888 398,880 405,888 430,880 444,885 488,885 547,890 563,887 592,882 622,887 638,880 660,880 705,882 735,880 809,887 824,887 840,885 854,887 899,887 921,882 936,882 966,904 981,880 1033,878 1070,878 1123,878 1175,876 1295,878 1310,880 1385,882 1400,885 1474,880 1548,878').forEach(([x, y]) => { flows[Math.round((x - 18) / 7.464)] = y; });
for (let i = 0; i < 206; i++) {
  const y = flows[i] || ((i * 7 + (i >> 2)) % 5 < 2 ? 866 : 876), zero = 1971, v = 1660 + y / 2.8;
  rect(D, X(i) - 2.2, Math.min(zero, v), 4.4, Math.max(1.5, Math.abs(v - zero)), y < 870 ? (y > 864 ? '#cf8f8d' : RED) : GREEN);
}
series(D, '17,1010 32,1018 40,990 47,1018 55,1005 62,1018 70,992 77,1010 85,1060 93,1035 100,1065 107,1115 115,1150 130,1130 143,1107 155,1138 165,1130 182,1087 196,1070 205,1135 220,1115 235,1165 250,1110 257,1065 265,1140 272,1135 279,1220 287,1230 300,1262 312,1282 325,1250 345,1235 353,1240 361,1195 370,1255 378,1270 392,1248 407,1278 420,1227 428,1235 436,1218 445,1235 458,1192 470,1190 480,1170 490,1195 510,1185 518,1152 525,1165 540,1135 550,1165 563,1188 575,1165 590,1175 607,1165 615,1110 625,1130 640,1140 653,1120 665,1130 690,1115 698,1093 715,1110 730,1105 745,1130 795,1125 802,1080 810,1105 817,1040 825,1070 832,1042 845,1065 870,1080 893,1075 905,1105 930,1115 938,1125 955,1098 965,1160 980,1167 1000,1160 1020,1127 1035,1145 1055,1130 1063,1092 1075,1105 1095,1090 1120,1095 1130,1110 1190,1105 1210,1090 1270,1070 1287,1048 1310,1080 1340,1050 1362,1017 1375,1030 1395,1030 1405,1055 1440,1055 1455,1028 1485,1035 1503,1008 1515,1018 1532,990 1548,1010', '', 1660, 2.8, GOLD, false, 3, 1.2444);
series(D, '17,1008 40,1003 70,1005 95,1030 110,1075 137,1130 180,1123 198,1095 220,1100 237,1137 265,1122 280,1140 295,1200 320,1268 345,1255 362,1230 385,1243 405,1262 440,1248 480,1188 515,1185 545,1155 585,1173 607,1165 640,1132 670,1130 710,1108 728,1103 765,1127 805,1118 830,1070 848,1057 870,1077 893,1075 935,1112 955,1112 1000,1160 1030,1137 1055,1137 1095,1100 1120,1097 1150,1107 1190,1105 1230,1080 1270,1075 1300,1060 1340,1065 1372,1030 1395,1030 1430,1053 1450,1045 1500,1030 1535,1003 1548,1003', '', 1660, 2.8, VIOLET, true, 3.4, 1.2444);
series(D, '17,1022 45,1010 78,1005 100,1025 125,1070 155,1115 178,1125 200,1108 262,1115 290,1155 320,1210 345,1252 395,1243 445,1250 485,1208 510,1195 540,1172 585,1163 610,1167 640,1150 680,1125 730,1112 795,1123 815,1115 850,1080 885,1067 925,1090 970,1115 1000,1140 1035,1150 1070,1127 1120,1100 1185,1108 1230,1098 1290,1070 1335,1067 1400,1037 1445,1047 1490,1045 1548,1013', '', 1660, 2.8, '#168f16', true, 3.4, 1.2444);
label(D, 14, 2001, 67, '0.53', '#888', 38);
label(D, 14, 2115, 78, '-7.38', '#888', 38);

/* ---- Date ruler ---- */
const T = document.getElementById('ticks');
for (let i = 25; i < 206; i++) line(T, `M${X(i)} 2123V2133`, '#777', 2, { opacity: Math.min(1, (i - 24) / 12) });
[417, 831, 1245].forEach(x => line(T, `M${x} 2123V2139`, '#666', 2.5));

/* ---- Settings gear: six teeth ---- */
let g = '';
for (let i = 0; i < 6; i++) {
  [[-13, 26], [13, 26], [19, 21.5], [41, 21.5]].forEach(([a, r]) => {
    const q = (i * 60 - 90 + a) * Math.PI / 180;
    g += (g ? 'L' : 'M') + (r * Math.cos(q)).toFixed(1) + ' ' + (r * Math.sin(q)).toFixed(1);
  });
}
document.getElementById('gear').setAttribute('d', g + 'Z');
```
